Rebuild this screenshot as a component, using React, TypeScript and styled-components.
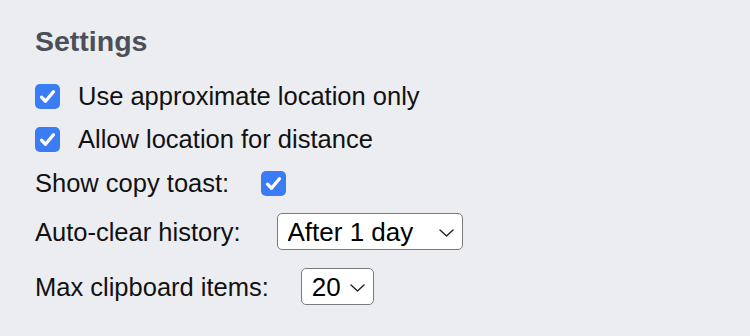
import styled, { createGlobalStyle } from "styled-components";

const GlobalStyle = createGlobalStyle`
  html, body {
    margin: 0;
    background: #ecedf1;
  }
  body {
    font-family: "Liberation Sans", Arial, Helvetica, sans-serif;
    color: #111;
  }
`;

const Panel = styled.section`
  padding: 25px 35px;
  display: flex;
  flex-direction: column;
`;

const Heading = styled.h2`
  margin: 0 0 25px;
  font-size: 28.5px;
  font-weight: bold;
  color: #4b4f57;
  line-height: 32px;
`;

const List = styled.div`
  display: flex;
  flex-direction: column;
`;

const Row = styled.label<{ $gap?: number; $top?: number }>`
  display: flex;
  align-items: center;
  gap: ${(p) => p.$gap ?? 32}px;
  margin-top: ${(p) => p.$top ?? 0}px;
  font-size: 25.5px;
  line-height: 28px;
  min-height: 28px;
`;

const Box = styled.span<{ $checked: boolean }>`
  width: 25px;
  height: 25px;
  border-radius: 5px;
  background: ${(p) => (p.$checked ? "#3a7cf4" : "#fff")};
  display: inline-flex;
  align-items: center;
  justify-content: center;
  flex-shrink: 0;

  svg {
    width: 19px;
    height: 19px;
  }
`;

const SelectWrap = styled.span`
  position: relative;
  display: inline-flex;
`;

const Select = styled.select<{ $width: number }>`
  appearance: none;
  width: ${(p) => p.$width}px;
  height: 37px;
  padding: 0 0 0 10px;
  border: 1.5px solid #7b7b7d;
  border-radius: 5px;
  background: #fff;
  font-family: "Liberation Sans", Arial, Helvetica, sans-serif;
  font-size: 26px;
  color: #000;
  outline: none;
`;

const Chevron = styled.svg`
  position: absolute;
  right: 9px;
  top: 50%;
  width: 15px;
  height: 8px;
  margin-top: -3px;
  pointer-events: none;
`;

const Check = ({ checked }: { checked: boolean }) => (
  <Box $checked={checked}>
    {checked && (
      <svg viewBox="0 0 16 16" fill="none">
        <path d="M3 8.6 L6.3 12 L13 4" stroke="#fff" strokeWidth="2.8" strokeLinecap="round" strokeLinejoin="round" />
      </svg>
    )}
  </Box>
);

const Dropdown = ({ value, options, width }: { value: string; options: string[]; width: number }) => (
  <SelectWrap>
    <Select $width={width} defaultValue={value}>
      {options.map((o) => (
        <option key={o}>{o}</option>
      ))}
    </Select>
    <Chevron viewBox="0 0 15 8" fill="none">
      <path d="M1 1 L7.5 7 L14 1" stroke="#222" strokeWidth="1.4" strokeLinecap="round" strokeLinejoin="round" />
    </Chevron>
  </SelectWrap>
);

export default function App() {
  return (
    <>
      <GlobalStyle />
      <Panel>
        <Heading>Settings</Heading>
        <List>
          <Row $gap={18}>
            <Check checked />
            Use approximate location only
          </Row>
          <Row $gap={18} $top={15}>
            <Check checked />
            Allow location for distance
          </Row>
          <Row $top={16}>
            Show copy toast:
            <Check checked />
          </Row>
          <Row $gap={36} $top={16}>
            Auto-clear history:
            <Dropdown value="After 1 day" options={["Never", "After 1 hour", "After 1 day", "After 1 week"]} width={186} />
          </Row>
          <Row $top={18}>
            Max clipboard items:
            <Dropdown value="20" options={["10", "20", "50", "100"]} width={73} />
          </Row>
        </List>
      </Panel>
    </>
  );
}
